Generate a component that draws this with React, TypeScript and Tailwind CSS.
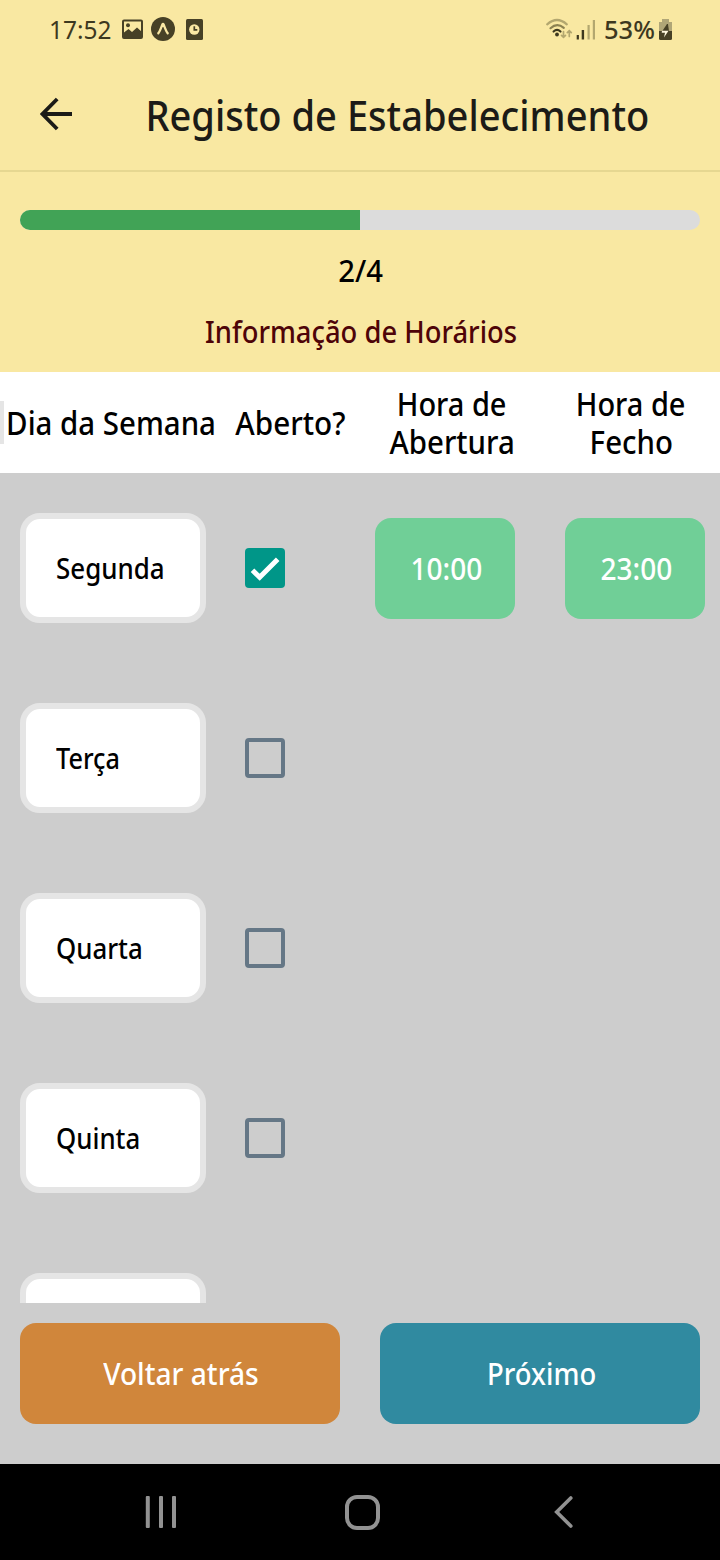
import { ReactNode } from "react";

type Day = { name: string; scale: string; open?: string; close?: string };

const days: Day[] = [
  { name: "Segunda", scale: "scale-x-[0.894]", open: "10:00", close: "23:00" },
  { name: "Terça", scale: "scale-x-[0.87]" },
  { name: "Quarta", scale: "scale-x-[0.89]" },
  { name: "Quinta", scale: "scale-x-[0.89]" },
  { name: "", scale: "scale-x-[0.89]" },
];

function Label({ className, children }: { className: string; children: ReactNode }) {
  return <span className={`block shrink-0 whitespace-nowrap ${className}`}>{children}</span>;
}

function StatusBar() {
  return (
    <div className="flex h-[58px] shrink-0 items-center text-[26px] leading-[30px] text-[#3d381f]">
      <Label className="ml-[49px] w-[73px] origin-left scale-x-[0.94]">17:52</Label>
      <svg className="h-[20px] w-[22px] shrink-0" viewBox="0 0 22 20" fill="none">
        <rect x="1" y="1.5" width="19" height="17.5" rx="1" stroke="#474126" strokeWidth="2" />
        <circle cx="6" cy="6.3" r="2" fill="#474126" />
        <path d="M2 18V13.500l4.500-3.500 3.500 3L15 8.500l5 4.500v5z" fill="#474126" />
      </svg>
      <svg className="ml-[7px] h-[24px] w-[24px] shrink-0" viewBox="0 0 24 24" fill="none">
        <circle cx="12" cy="12" r="12" fill="#474126" />
        <path d="M7.300 16.300C9 14 10.500 9.800 11.300 7.600q.7-1.300 1.400 0C13.500 9.800 15 14 16.700 16.300" stroke="#fae8a4" strokeWidth="2.300" strokeLinecap="round" />
      </svg>
      <svg className="ml-[11px] h-[21px] w-[17px] shrink-0" viewBox="0 0 17 21" fill="none">
        <rect width="17" height="21" rx="1.500" fill="#474126" />
        <circle cx="8.300" cy="10.500" r="5.200" fill="#fae8a4" />
        <path d="M8.300 7.200v3.600h3" stroke="#474126" strokeWidth="1.700" />
      </svg>
      <svg className="ml-[343px] h-[22px] w-[27px] shrink-0" viewBox="0 0 27 22" fill="none" strokeLinecap="round">
        <path d="M1.200 6.300Q11 -2.300 20.800 6.300" stroke="#b3a76f" strokeWidth="2.200" />
        <path d="M4.500 10.200Q11 4.200 17.800 9.800" stroke="#8c8252" strokeWidth="2.200" />
        <path d="M7.600 13.500Q11 10.300 14.500 13.500" stroke="#3d381f" strokeWidth="2.200" />
        <circle cx="11" cy="16.500" r="1.900" fill="#3d381f" />
        <path d="M17.500 13.500v5.800m-2-2 2 2 2-2M23.300 18.500V12.700m-2 2 2-2 2 2" stroke="#b3a76f" strokeWidth="1.700" />
      </svg>
      <svg className="ml-[3px] h-[21px] w-[20px] shrink-0" viewBox="0 0 20 21">
        <rect x="0.700" y="16" width="2.200" height="4.500" fill="#3d381f" />
        <rect x="5.700" y="11" width="2.400" height="9.500" fill="#3d381f" />
        <rect x="11.500" y="6" width="2.200" height="14.500" fill="#b3a76f" />
        <rect x="16.800" y="1" width="2.200" height="19.500" fill="#b3a76f" />
      </svg>
      <Label className="ml-[8px] w-[55px] origin-left font-medium scale-x-[0.98]">53%</Label>
      <svg className="h-[21px] w-[13px] shrink-0" viewBox="0 0 13 21">
        <path d="M3 0h7v3h3v9H0V3h3z" fill="#b0a677" />
        <path d="M0 12h13v7.500q0 1.500-1.500 1.500h-10Q0 21 0 19.500z" fill="#474126" />
        <path d="M8 5 3 12.500h7L9 5z" fill="#474126" />
        <path d="M3 11.700h6.500L5 18.500l1-4.800H2.700z" fill="#fff8df" />
      </svg>
    </div>
  );
}

function Header() {
  return (
    <header className="flex h-[114px] shrink-0 items-center border-b-2 border-[#e6d791]">
      <svg className="ml-[40px] h-[34px] w-[34px] shrink-0" viewBox="0 0 34 34" fill="none" stroke="#1c1b17" strokeWidth="3.800">
        <path d="M32 17H3M17.200 2 2.500 17l14.700 15" />
      </svg>
      <Label className="ml-[70px] mt-px origin-left scale-x-[0.929] pl-[1.500px] text-[41px] font-medium leading-[50px] text-[#1c1b17]">
        Registo de Estabelecimento
      </Label>
    </header>
  );
}

function Progress() {
  return (
    <section className="flex h-[200px] shrink-0 flex-col items-center pt-[38px] font-medium">
      <div className="h-[20px] w-[680px] overflow-hidden rounded-full bg-[#dcdcdc]">
        <div className="h-full w-1/2 bg-[#41a356]" />
      </div>
      <Label className="mt-[20px] ml-[2px] scale-x-[0.943] text-[31px] leading-[40px] text-black">2/4</Label>
      <Label className="mt-[22px] ml-[2px] scale-x-[0.912] text-[30px] leading-[40px] text-[#4e0408]">Informação de Horários</Label>
    </section>
  );
}

function TableHeader() {
  return (
    <div className="relative grid h-[101px] shrink-0 grid-cols-[223px_135px_188px_170px] items-center justify-items-center bg-white pt-px text-[32px] font-medium leading-[38px] text-black">
      <span className="absolute left-0 top-[29px] h-[43px] w-[4px] bg-[#e5e5e5]" />
      <Label className="-mx-4 scale-x-[0.92]">Dia da Semana</Label>
      <Label className="scale-x-[0.928]">Aberto?</Label>
      <div className="flex flex-col items-center">
        <Label className="scale-x-[0.905]">Hora de</Label>
        <Label className="scale-x-[0.92]">Abertura</Label>
      </div>
      <div className="flex flex-col items-center">
        <Label className="scale-x-[0.905]">Hora de</Label>
        <Label className="scale-x-[0.92]">Fecho</Label>
      </div>
    </div>
  );
}

function Checkbox({ checked }: { checked: boolean }) {
  if (!checked) return <div className="h-[40px] w-[40px] shrink-0 rounded-[4px] border-4 border-[#657786]" />;
  return (
    <div className="h-[40px] w-[40px] shrink-0 rounded-[4px] bg-[#009688]">
      <svg className="h-full w-full" viewBox="0 0 40 40" fill="none" stroke="#fff" strokeWidth="5">
        <path d="M7.500 22.200 14.700 29.300 32.700 11.300" />
      </svg>
    </div>
  );
}

function TimeButton({ className, children }: { className: string; children: ReactNode }) {
  return (
    <button className={`flex h-[101px] w-[140px] shrink-0 items-center justify-center rounded-[16px] bg-[#70cf97] text-[30px] font-medium text-white ${className}`}>
      <Label className="ml-[2px] scale-x-[0.935]">{children}</Label>
    </button>
  );
}

function DayRow({ day }: { day: Day }) {
  return (
    <div className="flex h-[190px] shrink-0 items-center pl-[20px]">
      <div className="flex h-[110px] w-[186px] shrink-0 items-center rounded-[20px] border-[6px] border-[#e5e5e5] bg-white pl-[30px] text-[29px] font-medium text-black">
        <Label className={`origin-left ${day.scale}`}>{day.name}</Label>
      </div>
      <div className="ml-[39px]">
        <Checkbox checked={Boolean(day.open)} />
      </div>
      {day.open && (
        <>
          <TimeButton className="ml-[90px]">{day.open}</TimeButton>
          <TimeButton className="ml-[50px]">{day.close}</TimeButton>
        </>
      )}
    </div>
  );
}

function NavBar() {
  return (
    <nav className="flex h-[96px] shrink-0 items-center bg-black">
      <svg className="ml-[145px] h-[32px] w-[32px]" viewBox="0 0 32 32" fill="#929292">
        <rect x="0.800" width="4" height="32" rx="1" />
        <rect x="14" width="4" height="32" rx="1" />
        <rect x="27" width="4" height="32" rx="1" />
      </svg>
      <div className="ml-[168px] h-[35px] w-[35px] rounded-[12px] border-4 border-[#929292]" />
      <svg className="ml-[172px] h-[34px] w-[22px]" viewBox="0 0 22 34" fill="none" stroke="#929292" strokeWidth="3.600" strokeLinecap="round">
        <path d="M18.800 3 4.700 17l14.100 14" />
      </svg>
    </nav>
  );
}

export default function App() {
  return (
    <div className="flex h-[1560px] w-[720px] flex-col overflow-hidden bg-[#f9e8a2] font-['Noto_Sans',sans-serif]">
      <StatusBar />
      <Header />
      <Progress />
      <TableHeader />
      <main className="flex h-[830px] shrink-0 flex-col overflow-hidden bg-[#cdcdcd]">
        {days.map((day, i) => (
          <DayRow key={i} day={day} />
        ))}
      </main>
      <footer className="flex h-[161px] shrink-0 gap-[40px] bg-[#cdcdcd] px-[20px] pt-[20px] text-[30px] font-medium text-white">
        <button className="flex h-[101px] w-[320px] items-center justify-center rounded-[16px] bg-[#d0863b]">
          <Label className="ml-[2px] scale-x-[0.938]">Voltar atrás</Label>
        </button>
        <button className="flex h-[101px] w-[320px] items-center justify-center rounded-[16px] bg-[#308aa0]">
          <Label className="ml-[3px] scale-x-[0.915]">Próximo</Label>
        </button>
      </footer>
      <NavBar />
    </div>
  );
}
